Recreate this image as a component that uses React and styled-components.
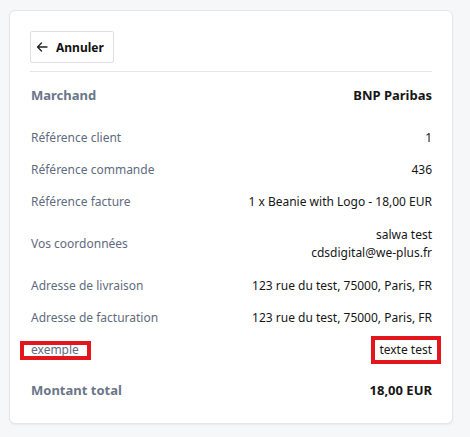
import React from "react";
import styled, { createGlobalStyle } from "styled-components";

const GlobalStyle = createGlobalStyle`
  body {
    margin: 0;
    background: #f6f7f9;
    font-family: "Noto Sans", "Open Sans", sans-serif;
  }
`

const Page = styled.div`
  padding: 10px 17px 13px 9px;
`

const Card = styled.div`
  background: #fff;
  border: 1px solid #e3e5e8;
  border-radius: 6px;
  box-shadow: 0 1px 2px rgba(0, 0, 0, 0.06);
  padding: 20px 20px 15px 20px;
`

const BackButton = styled.button`
  display: flex;
  align-items: center;
  gap: 8px;
  height: 32px;
  padding: 0 9px 0 5px;
  background: #fff;
  border: 1px solid #dcdfe3;
  border-radius: 2px;
  font-family: inherit;
  font-size: 12px;
  font-weight: 700;
  color: #111;
  cursor: pointer;
`

const Divider = styled.hr`
  border: 0;
  border-top: 1px solid #e3e5e8;
  margin: 8px 0 0;
`

const Row = styled.div`
  display: flex;
  justify-content: space-between;
  align-items: center;
  padding: ${p => p.$pad || "7px 0"};
  font-size: ${p => (p.$big ? "13px" : "12px")};
  line-height: 18px;
`

const Label = styled.span`
  position: relative;
  color: ${p => (p.$big ? "#6b7689" : "#5f6b7e")};
  font-weight: ${p => (p.$big ? 700 : 400)};
  padding-left: 1px;
`

const Value = styled.span`
  position: relative;
  color: #161616;
  text-align: right;
  font-weight: ${p => (p.$big ? 700 : 400)};
`

// red frame drawn over a highlighted field
const Mark = styled.span`
  position: absolute;
  border: 4px solid #e3161d;
  pointer-events: none;
  inset: ${p => p.$inset};
`

const ArrowIcon = () => (
  <svg width="12" height="12" viewBox="0 0 12 12" fill="none" stroke="#222" strokeWidth="1.3" strokeLinecap="round" strokeLinejoin="round">
    <path d="M11 6H1.5M5.5 2 1.5 6l4 4" />
  </svg>
)

const rows = [
  ["Référence client", "1"],
  ["Référence commande", "436"],
  ["Référence facture", "1 x Beanie with Logo - 18,00 EUR"],
  ["Vos coordonnées", ["salwa test", "cdsdigital@we-plus.fr"]],
  ["Adresse de livraison", "123 rue du test, 75000, Paris, FR"],
  ["Adresse de facturation", "123 rue du test, 75000, Paris, FR"],
]

const App = () => {
  return (
    <>
      <GlobalStyle />
      <Page>
        <Card>
          <BackButton>
            <ArrowIcon />
            Annuler
          </BackButton>
          <Divider />
          <Row $big $pad="14px 0 18px">
            <Label $big>Marchand</Label>
            <Value $big>BNP Paribas</Value>
          </Row>
          {rows.map(([label, value], i) => (
            <Row key={i} $pad={Array.isArray(value) ? "8px 0" : undefined}>
              <Label>{label}</Label>
              <Value>
                {Array.isArray(value)
                  ? value.map((line, j) => <div key={j}>{line}</div>)
                  : value}
              </Value>
            </Row>
          ))}
          <Row>
            <Label>
              exemple
              <Mark $inset="0 -12px -1px -10px" />
            </Label>
            <Value>
              texte test
              <Mark $inset="-5px -9px -5px -8px" />
            </Value>
          </Row>
          <Row $big $pad="15px 0 9px">
            <Label $big>Montant total</Label>
            <Value $big>18,00 EUR</Value>
          </Row>
        </Card>
      </Page>
    </>
  );
};

export default App;
